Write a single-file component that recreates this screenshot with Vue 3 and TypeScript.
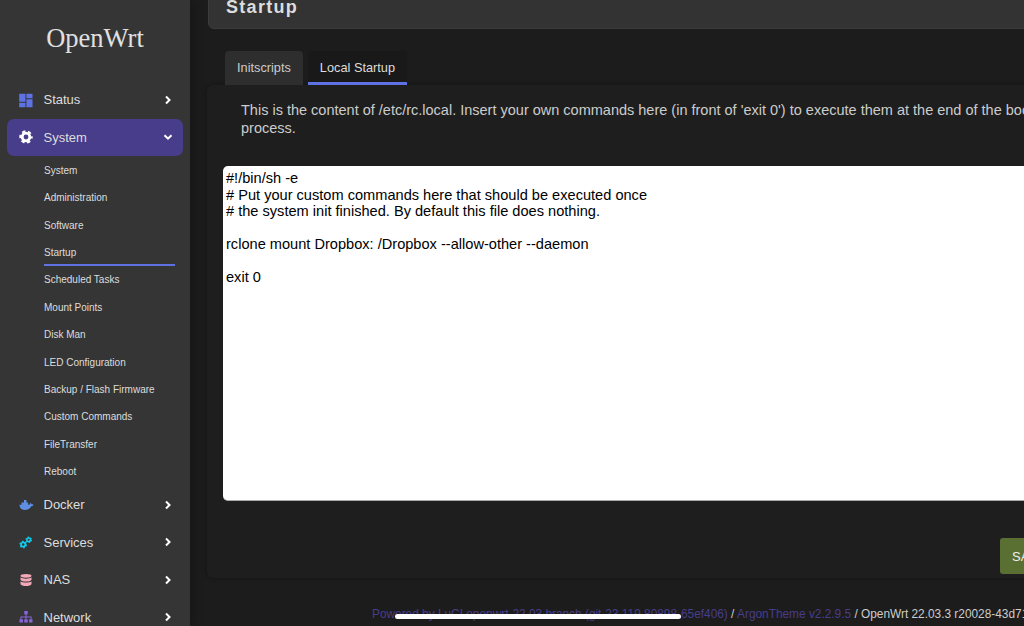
<script setup lang="ts">
const subItems: string[] = [
  'System', 'Administration', 'Software', 'Startup', 'Scheduled Tasks', 'Mount Points',
  'Disk Man', 'LED Configuration', 'Backup / Flash Firmware', 'Custom Commands', 'FileTransfer', 'Reboot'
]
const script = `#!/bin/sh -e
# Put your custom commands here that should be executed once
# the system init finished. By default this file does nothing.

rclone mount Dropbox: /Dropbox --allow-other --daemon

exit 0
`
</script>

<template>
  <div class="screen">
    <aside class="sidebar">
      <div class="brand">OpenWrt</div>
      <nav class="nav">
        <a class="item">
          <svg class="ico" viewBox="0 0 16 16"><path fill="#5e72e4" d="M1.200 1.800h6.200v8H1.200zM1.200 10.800h6.200v4.400H1.200zM8.400 1.800h6.100v4.400H8.400zM8.400 7.200h6.100v8H8.400z"/></svg>
          <span class="label">Status</span>
          <svg class="chev" viewBox="0 0 10 10"><path d="M3 1.500 6.500 5 3 8.500" /></svg>
        </a>
        <a class="item active">
          <svg class="ico" viewBox="0 0 16 16"><circle cx="8" cy="8" r="3.800" fill="none" stroke="#fff" stroke-width="2.800"/><circle cx="8" cy="8" r="5.700" fill="none" stroke="#fff" stroke-width="2" stroke-dasharray="3.300 2.670" stroke-dashoffset="1.650"/></svg>
          <span class="label">System</span>
          <svg class="chev" viewBox="0 0 10 10"><path d="M1.500 3.200 5 6.700 8.500 3.200" /></svg>
        </a>
        <ul class="subs">
          <li v-for="s in subItems" :key="s" class="sub" :class="{ current: s === 'Startup' }">{{ s }}</li>
        </ul>
        <a class="item">
          <svg class="ico" viewBox="0 0 16 16"><path fill="#5e8fe4" d="M6 3h2.500v2.400h1.600v2.300h1.500c.1-.8.500-1.300 1-1.600.5.300.9.800 1 1.300.6-.2 1.200-.1 1.800.3-.4 1-1.200 1.500-2.200 1.500C12 11.700 9.800 13 7 13c-3.200 0-5-1.700-5.500-4.600V7.700h2V5.400H6z"/></svg>
          <span class="label">Docker</span>
          <svg class="chev" viewBox="0 0 10 10"><path d="M3 1.500 6.500 5 3 8.500" /></svg>
        </a>
        <a class="item">
          <svg class="ico" viewBox="0 0 16 16"><g fill="none" stroke="#11cdef"><circle cx="5.200" cy="10.500" r="2.100" stroke-width="1.700"/><circle cx="10.700" cy="5.800" r="1.800" stroke-width="1.500"/><circle cx="5.200" cy="10.500" r="3.200" stroke-width="1.300" stroke-dasharray="1.700 1.650"/><circle cx="10.700" cy="5.800" r="2.700" stroke-width="1.200" stroke-dasharray="1.400 1.430"/></g></svg>
          <span class="label">Services</span>
          <svg class="chev" viewBox="0 0 10 10"><path d="M3 1.500 6.500 5 3 8.500" /></svg>
        </a>
        <a class="item">
          <svg class="ico" viewBox="0 0 16 16"><g fill="#f5a9b8"><ellipse cx="8" cy="3.800" rx="5.500" ry="1.900"/><path d="M2.500 5.300C3.500 6.300 5.800 6.700 8 6.700s4.500-.4 5.500-1.400v2.400C13 9 10.500 9.500 8 9.500S3 9 2.500 7.700zM2.500 9.200c1 1 3.300 1.400 5.500 1.400s4.500-.4 5.500-1.400v2.800C13 13.400 10.500 14 8 14s-5-.6-5.500-2z"/></g></svg>
          <span class="label">NAS</span>
          <svg class="chev" viewBox="0 0 10 10"><path d="M3 1.500 6.500 5 3 8.500" /></svg>
        </a>
        <a class="item">
          <svg class="ico" viewBox="0 0 16 16"><g fill="#8965e0"><path d="M6.300 2h3.400v3.400H6.300zM1.500 10.200h3.400v3.400H1.500zM6.300 10.200h3.400v3.400H6.300zM11.100 10.200h3.400v3.400h-3.400z"/><path d="M7.500 5.400h1v2.200h5.100v2.600h-1V8.500H8.500v1.700h-1V8.500H3.400v1.700h-1V7.600h5.100z"/></g></svg>
          <span class="label">Network</span>
          <svg class="chev" viewBox="0 0 10 10"><path d="M3 1.500 6.500 5 3 8.500" /></svg>
        </a>
      </nav>
    </aside>

    <main class="main">
      <header class="pagehead"><h2>Startup</h2></header>
      <div class="tabs">
        <span class="tab">Initscripts</span>
        <span class="tab selected">Local Startup</span>
      </div>
      <section class="panel">
        <p class="desc">This is the content of /etc/rc.local. Insert your own commands here (in front of 'exit 0') to execute them at the end of the boot process.</p>
        <textarea class="editor" spellcheck="false" :value="script"></textarea>
        <div class="actions"><button class="save">SAVE</button></div>
      </section>
      <footer class="foot">
        <span class="link">Powered by LuCI openwrt-22.03 branch (git-23.119.80898-65ef406)</span> /
        <span class="link">ArgonTheme v2.2.9.5</span> / OpenWrt 22.03.3 r20028-43d71ad93e
      </footer>
    </main>
    <div class="home"></div>
  </div>
</template>

<style>
html, body { margin: 0; background: #1c1c1c; overflow: hidden; }
</style>

<style scoped>
.screen {
  position: relative;
  width: 1024px;
  height: 626px;
  display: flex;
  overflow: hidden;
  background: #1c1c1c;
  font-family: "Liberation Sans", Arial, sans-serif;
  color: #ddd;
}
.sidebar {
  position: relative;
  z-index: 1;
  flex: 0 0 190px;
  height: 626px;
  overflow: hidden;
  background: #353535;
  box-sizing: border-box;
  box-shadow: 4px 0 10px rgba(0, 0, 0, .2);
}
.brand {
  font-family: "Liberation Serif", serif;
  font-size: 26.500px;
  line-height: 32px;
  text-align: center;
  padding-top: 22px;
  color: #e0e0e0;
}
.nav { margin-top: 27px; padding: 0 7.500px 0 7px; }
.item {
  display: flex;
  align-items: center;
  height: 37.500px;
  border-radius: 7px;
  padding: 0 9.500px 0 10.500px;
  font-size: 13px;
  color: #ddd;
}
.item.active { background: #483d8b; }
.ico { width: 16px; height: 16px; flex: none; margin-right: 10px; }
.label { flex: 1; }
.chev { width: 10px; height: 10px; flex: none; }
.chev path { fill: none; stroke: #fff; stroke-width: 2; }
.subs { list-style: none; margin: 0 0 0 37px; padding: 0 0 0.500px; width: 131px; }
.sub {
  box-sizing: border-box;
  height: 27.360px;
  line-height: 28px;
  font-size: 10px;
  color: #ddd;
  white-space: nowrap;
}
.sub:first-child { margin-top: 1px; }
.sub.current { border-bottom: 2px solid #5e72e4; }
.main { flex: none; width: 900px; margin-left: 17px; }
.pagehead {
  height: 43px;
  margin: -14px 0 0 1px;
  background: #333;
  border: 1px solid #3c3c3c;
  border-radius: 6px;
  box-sizing: border-box;
  padding-left: 17px;
}
.pagehead h2 {
  margin: 0;
  font-size: 18px;
  line-height: 41px;
  font-weight: 700;
  letter-spacing: 1.300px;
  color: #ddd;
}
.tabs { display: flex; gap: 5px; margin: 22px 0 0 18px; height: 34px; }
.tab {
  box-sizing: border-box;
  padding: 0 12px;
  height: 34px;
  line-height: 33px;
  font-size: 12.750px;
  background: #2e2e2e;
  border-radius: 4px 4px 0 0;
  color: #ccc;
}
.tab.selected { background: #191919; border-bottom: 3px solid #5e72e4; color: #ddd; }
.panel {
  background: #1e1e1e;
  box-shadow: 0 0 4px rgba(0, 0, 0, .35);
  border-radius: 6px;
  height: 493px;
  box-sizing: border-box;
}
.desc {
  margin: 0;
  padding: 16px 0 0 34px;
  width: 830px;
  font-size: 14.500px;
  line-height: 18px;
  color: #ccc;
}
.editor {
  display: block;
  box-sizing: border-box;
  width: 880px;
  height: 335px;
  margin: 29px 0 0 16px;
  padding: 4px 3px 3px;
  border: 0;
  border-bottom: 1px solid #aaa;
  border-radius: 5px;
  resize: none;
  background: #fff;
  color: #000;
  font-family: "Liberation Sans", Arial, sans-serif;
  font-size: 14.600px;
  line-height: 16.500px;
  overflow: hidden;
}
.actions { padding: 37px 0 0 793px; }
.save {
  display: block;
  height: 36px;
  width: 80px;
  padding: 0 0 0 12px;
  text-align: left;
  border: 0;
  border-radius: 3px;
  background: #5a7033;
  color: #eee;
  font: 13px "Liberation Sans", Arial, sans-serif;
}
.foot {
  margin: 28px 0 0 165px;
  font-size: 11.870px;
  line-height: 16px;
  white-space: nowrap;
  color: #ccc;
}
.link { color: #483d8b; }
.home {
  position: absolute;
  left: 395px;
  top: 614px;
  width: 286px;
  height: 5px;
  border-radius: 3px;
  background: #fff;
}
</style>
